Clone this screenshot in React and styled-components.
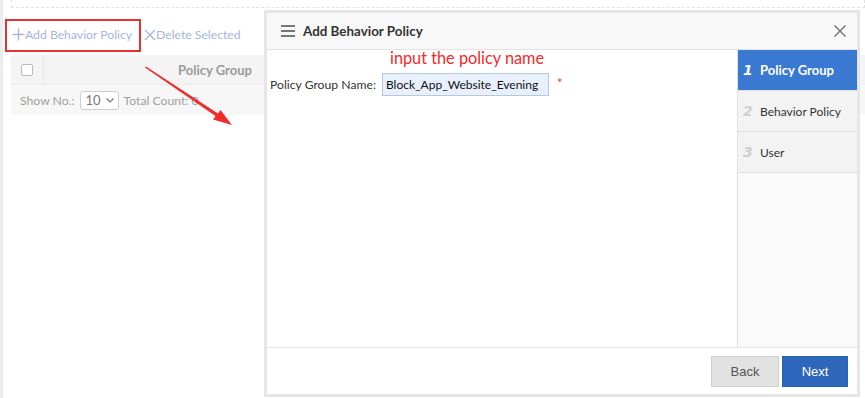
import React from 'react';
import styled, { createGlobalStyle } from 'styled-components';

const Global = createGlobalStyle`
  html, body { margin: 0; padding: 0; background: #fff; }
  body { font-family: Lato, "Open Sans", sans-serif; }
`;

const Page = styled.div`
  position: relative;
  width: 865px;
  height: 398px;
  box-sizing: border-box;
  border-left: 3px solid #ececec;
  background: #fff;
  overflow: hidden;
`;

const Content = styled.div`
  padding-left: 8px;
  display: flex;
  flex-direction: column;
`;

const SearchArea = styled.div`
  height: 8px;
  box-sizing: border-box;
  border: 1px dashed #e2e2e2;
  border-top: none;
`;

const Toolbar = styled.div`
  height: 47px;
  box-sizing: border-box;
  padding: 6px 0 0 1px;
  display: flex;
  align-items: center;
  gap: 12px;
`;

const ToolAction = styled.span`
  display: inline-flex;
  align-items: center;
  color: #a3b6de;
  font-size: 12.2px;
`;

const Table = styled.div`
  display: flex;
  flex-direction: column;
`;

const HeadRow = styled.div`
  height: 30px;
  display: flex;
  background: #f4f4f4;
  border-bottom: 1px solid #ebebeb;
  box-sizing: border-box;
`;

const CheckCell = styled.div`
  width: 32px;
  border-right: 1px solid #e6e6e6;
  display: flex;
  align-items: center;
  justify-content: center;
`;

const Checkbox = styled.span`
  width: 10px;
  height: 10px;
  border: 1px solid #b9b9b9;
  border-radius: 2px;
  background: #fff;
`;

const HeadCell = styled.div`
  width: ${p => p.$w}px;
  display: flex;
  align-items: center;
  justify-content: center;
  color: #9a9a9a;
  font-weight: bold;
  font-size: 13px;
`;

const FootRow = styled.div`
  height: 30px;
  display: flex;
  align-items: center;
  background: #f7f7f7;
  padding-left: 9px;
  color: #a0a0a0;
  font-size: 12.2px;
  gap: 5px;
`;

const Select = styled.span`
  width: 39px;
  height: 19px;
  box-sizing: border-box;
  border: 1px solid #cfcfcf;
  border-radius: 3px;
  background: #fff;
  display: inline-flex;
  align-items: center;
  justify-content: space-between;
  padding: 0 4px 0 5px;
  color: #777;
  font-size: 13px;
`;

const Dialog = styled.div`
  position: absolute;
  left: 261px;
  top: 10px;
  width: 596px;
  height: 387px;
  box-sizing: border-box;
  border: 3px solid #e6e6e6;
  background: #fff;
  display: flex;
  flex-direction: column;
`;

const DialogHeader = styled.div`
  height: 36px;
  flex: none;
  background: #f8f8f8;
  border-bottom: 1px solid #e4e4e4;
  display: flex;
  align-items: center;
  padding: 0 11px 0 14px;
`;

const Title = styled.div`
  flex: 1;
  margin-left: 8px;
  font-size: 13.4px;
  font-weight: bold;
  color: #333;
`;

const DialogBody = styled.div`
  flex: 1;
  display: flex;
  min-height: 0;
`;

const Form = styled.div`
  flex: 1;
  padding: 23px 0 0 3px;
`;

const FormRow = styled.div`
  display: flex;
  align-items: center;
  font-size: 12.2px;
  color: #333;
`;

const Input = styled.div`
  margin-left: 6px;
  width: 167px;
  height: 23px;
  box-sizing: border-box;
  border: 1px solid #b6c6dc;
  background: #e8f0fe;
  display: flex;
  align-items: center;
  padding-left: 3px;
  color: #111;
  font-size: 12px;
`;

const Required = styled.span`
  color: #e8413c;
  margin-left: 8px;
  font-size: 13px;
  align-self: flex-start;
  margin-top: 2px;
`;

const Steps = styled.div`
  width: 119px;
  flex: none;
  border-left: 1px solid #e0e0e0;
  background: #fafafa;
  display: flex;
  flex-direction: column;
`;

const Step = styled.div`
  height: 41px;
  box-sizing: border-box;
  border-bottom: 1px solid #e2e2e2;
  display: flex;
  align-items: center;
  padding-left: 5px;
  background: ${p => (p.$active ? '#3a79d2' : '#f3f3f3')};
  color: ${p => (p.$active ? '#fff' : '#333')};
  font-weight: ${p => (p.$active ? 'bold' : 'normal')};
  font-size: ${p => (p.$active ? '13px' : '12px')};
`;

const StepNo = styled.span`
  width: 17px;
  font-family: "DejaVu Sans", sans-serif;
  font-style: italic;
  font-weight: bold;
  font-size: 14px;
  color: ${p => (p.$active ? '#fff' : '#cfcfcf')};
`;

const DialogFooter = styled.div`
  height: 46px;
  flex: none;
  border-top: 1px solid #e4e4e4;
  display: flex;
  align-items: center;
  justify-content: flex-end;
  gap: 3px;
  padding-right: 9px;
`;

const Button = styled.button`
  height: 31px;
  width: ${p => p.$w}px;
  box-sizing: border-box;
  font-family: "Liberation Sans", Arial, sans-serif;
  font-size: 13px;
  border: 1px solid ${p => (p.$primary ? '#2a62b3' : '#cfcfcf')};
  background: ${p => (p.$primary ? '#2d66bb' : '#e2e2e2')};
  color: ${p => (p.$primary ? '#fff' : '#555')};
  cursor: pointer;
`;

const Highlight = styled.div`
  position: absolute;
  left: 2px;
  top: 19px;
  width: 136px;
  height: 33px;
  box-sizing: border-box;
  border: 2px solid #e8302f;
`;

const Note = styled.div`
  position: absolute;
  left: 387px;
  top: 50px;
  font-size: 16.3px;
  line-height: 16px;
  color: #f22a2a;
`;

const ArrowSvg = styled.svg`
  position: absolute;
  left: 0;
  top: 0;
  pointer-events: none;
`;

const Plus = () => (
  <svg width="13" height="13" viewBox="0 0 13 13">
    <path d="M6.5 0.5v12M0.5 6.5h12" stroke="#a3b6de" strokeWidth="1.4" />
  </svg>
);

const Cross = () => (
  <svg width="12" height="12" viewBox="0 0 12 12">
    <path d="M1 1l10 10M11 1L1 11" stroke="#a3b6de" strokeWidth="1.4" />
  </svg>
);

const Menu = () => (
  <svg width="14" height="12" viewBox="0 0 14 12">
    <path d="M0 1h14M0 6h14M0 11h14" stroke="#777" strokeWidth="2" />
  </svg>
);

const Close = () => (
  <svg width="12" height="12" viewBox="0 0 12 12">
    <path d="M0.5 0.5l11 11M11.5 0.5l-11 11" stroke="#777" strokeWidth="1.5" />
  </svg>
);

const Chevron = () => (
  <svg width="8" height="5" viewBox="0 0 8 5">
    <path d="M0.5 0.5l3.5 3.5 3.5-3.5" stroke="#777" strokeWidth="1.2" fill="none" />
  </svg>
);

export default function App() {
  return (
    <Page>
      <Global />
      <Content>
        <SearchArea />
        <Toolbar>
          <ToolAction><Plus />Add Behavior Policy</ToolAction>
          <ToolAction><Cross />Delete Selected</ToolAction>
        </Toolbar>
        <Table>
          <HeadRow>
            <CheckCell><Checkbox /></CheckCell>
            <HeadCell $w={342}>Policy Group</HeadCell>
          </HeadRow>
          <FootRow>
            Show No.:
            <Select>10<Chevron /></Select>
            Total Count: 0
          </FootRow>
        </Table>
      </Content>

      <Dialog>
        <DialogHeader>
          <Menu />
          <Title>Add Behavior Policy</Title>
          <Close />
        </DialogHeader>
        <DialogBody>
          <Form>
            <FormRow>
              Policy Group Name:
              <Input>Block_App_Website_Evening</Input>
              <Required>*</Required>
            </FormRow>
          </Form>
          <Steps>
            <Step $active><StepNo $active>1</StepNo>Policy Group</Step>
            <Step><StepNo>2</StepNo>Behavior Policy</Step>
            <Step><StepNo>3</StepNo>User</Step>
          </Steps>
        </DialogBody>
        <DialogFooter>
          <Button $w={68}>Back</Button>
          <Button $w={66} $primary>Next</Button>
        </DialogFooter>
      </Dialog>

      <Highlight />
      <Note>input the policy name</Note>
      <ArrowSvg width="240" height="130" viewBox="0 0 240 130">
        <path d="M143 66.5 L215 113.5 L217.5 110 L229 125 L210 119.5 L212.5 116 L142 67.5 Z" fill="#f02b2b" />
      </ArrowSvg>
    </Page>
  );
}
